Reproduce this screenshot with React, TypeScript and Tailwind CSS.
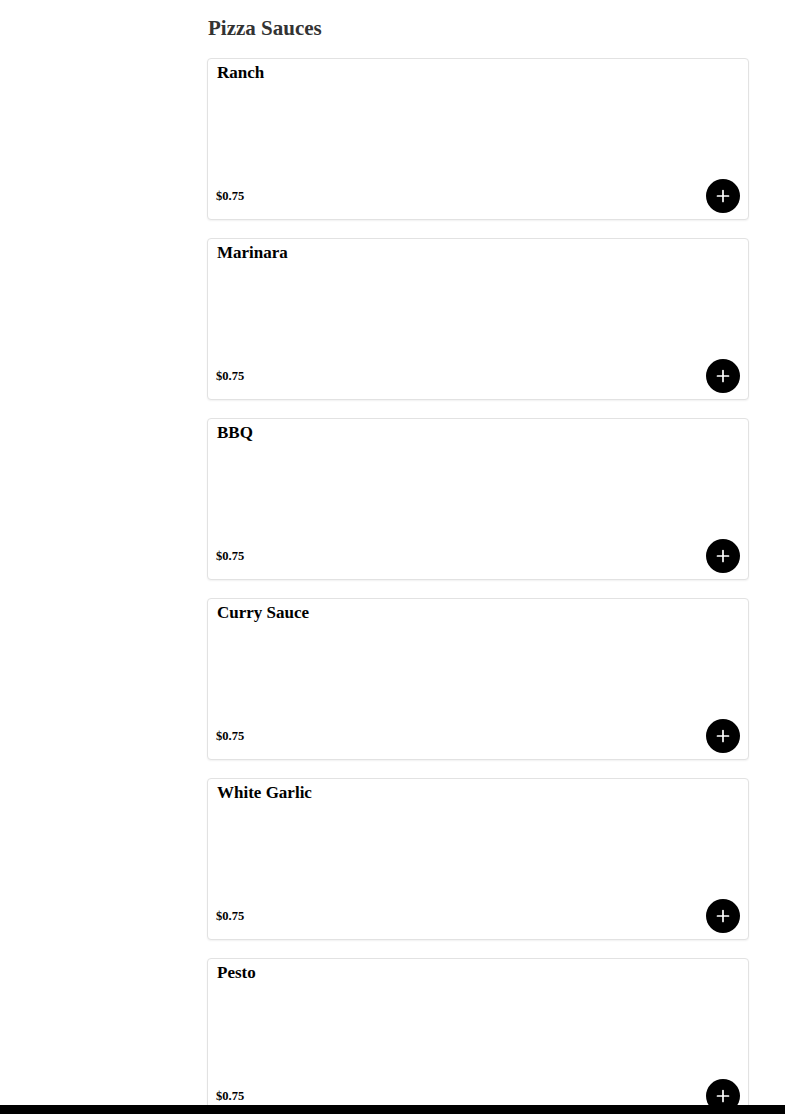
const items = ["Ranch", "Marinara", "BBQ", "Curry Sauce", "White Garlic", "Pesto"];

function PlusIcon() {
  return (
    <svg width="14" height="14" viewBox="0 0 14 14" fill="none">
      <path d="M7 1.5v11M1.5 7h11" stroke="white" strokeWidth="1.7" strokeLinecap="round" />
    </svg>
  );
}

export default function App() {
  return (
    <div className="min-h-screen bg-white font-['Liberation_Serif',serif]">
      <div className="pl-[207px] pr-[36px] pt-[14px] pb-10">
        <h2 className="text-[21px] font-bold text-[#333] leading-[28px] pl-px mb-[16px]">
          Pizza Sauces
        </h2>
        <div className="flex flex-col gap-[18px]">
          {items.map((name) => (
            <div
              key={name}
              className="h-[162px] border border-[#e2e2e2] rounded-[4px] bg-white shadow-[0_1px_2px_rgba(0,0,0,0.06)] flex flex-col justify-between pl-[8px] pr-[8px] pt-[4px] pb-[6px]"
            >
              <h3 className="text-[17px] font-bold text-black leading-[20px] pl-[1px]">{name}</h3>
              <div className="flex items-center justify-between">
                <span className="text-[12.5px] font-bold text-black">$0.75</span>
                <button className="w-[34px] h-[34px] rounded-full bg-black flex items-center justify-center">
                  <PlusIcon />
                </button>
              </div>
            </div>
          ))}
        </div>
      </div>
      <div className="fixed bottom-0 left-0 right-0 h-[9px] bg-black" />
    </div>
  );
}
